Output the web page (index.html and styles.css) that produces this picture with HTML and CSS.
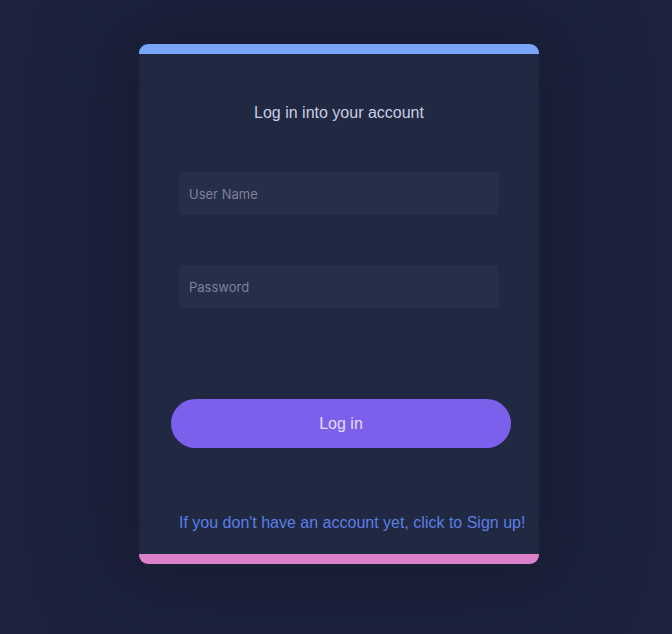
FILE: index.html
```html
<!DOCTYPE html>
<html>
<head>
<meta charset="utf-8">
<link rel="stylesheet" href="styles.css">
</head>
<body>
<div class="page">
  <form class="card">
    <h1 class="title">Log in into your account</h1>
    <input class="field field-user" type="text" placeholder="User Name">
    <input class="field field-pass" type="password" placeholder="Password">
    <button class="btn" type="button">Log in</button>
    <a class="signup">If you don't have an account yet, click to Sign up!</a>
  </form>
</div>
</body>
</html>
```
FILE: styles.css
```css
html, body {
  margin: 0;
  padding: 0;
  height: 100%;
}
body {
  background: #1d233e;
  font-family: "Liberation Sans", Arial, sans-serif;
}
.page {
  height: 634px;
  display: flex;
  justify-content: center;
  padding-top: 44px;
  padding-left: 6px;
  box-sizing: border-box;
}
.card {
  width: 400px;
  height: 520px;
  box-sizing: border-box;
  background: #212842;
  border-top: 10px solid #78a4fa;
  border-bottom: 10px solid #dd80cc;
  border-radius: 9px;
  box-shadow: 0 0 80px 30px rgba(15, 19, 38, 0.4);
  display: flex;
  flex-direction: column;
  align-items: center;
  padding-top: 50px;
}
.title {
  margin: 0;
  font-size: 16px;
  font-weight: normal;
  line-height: 18px;
  color: #c9cde2;
}
.field {
  width: 320px;
  height: 43px;
  box-sizing: border-box;
  border: none;
  outline: none;
  border-radius: 4px;
  background: #272e4a;
  padding: 0 10px;
  font-family: Inter, "Noto Sans", sans-serif;
  font-size: 13px;
  color: #c9cde2;
}
.field::placeholder {
  color: #7d8296;
}
.field-user {
  margin-top: 50px;
}
.field-pass {
  margin-top: 50px;
}
.btn {
  margin-top: 91px;
  margin-left: 4px;
  width: 340px;
  height: 49px;
  border: none;
  border-radius: 25px;
  background: #7c5fea;
  color: #e6ddff;
  font-family: "Liberation Sans", Arial, sans-serif;
  font-size: 16px;
}
.signup {
  margin-top: 66px;
  align-self: flex-start;
  margin-left: 40px;
  font-size: 16px;
  line-height: 18px;
  color: #5b7fe6;
}
```
